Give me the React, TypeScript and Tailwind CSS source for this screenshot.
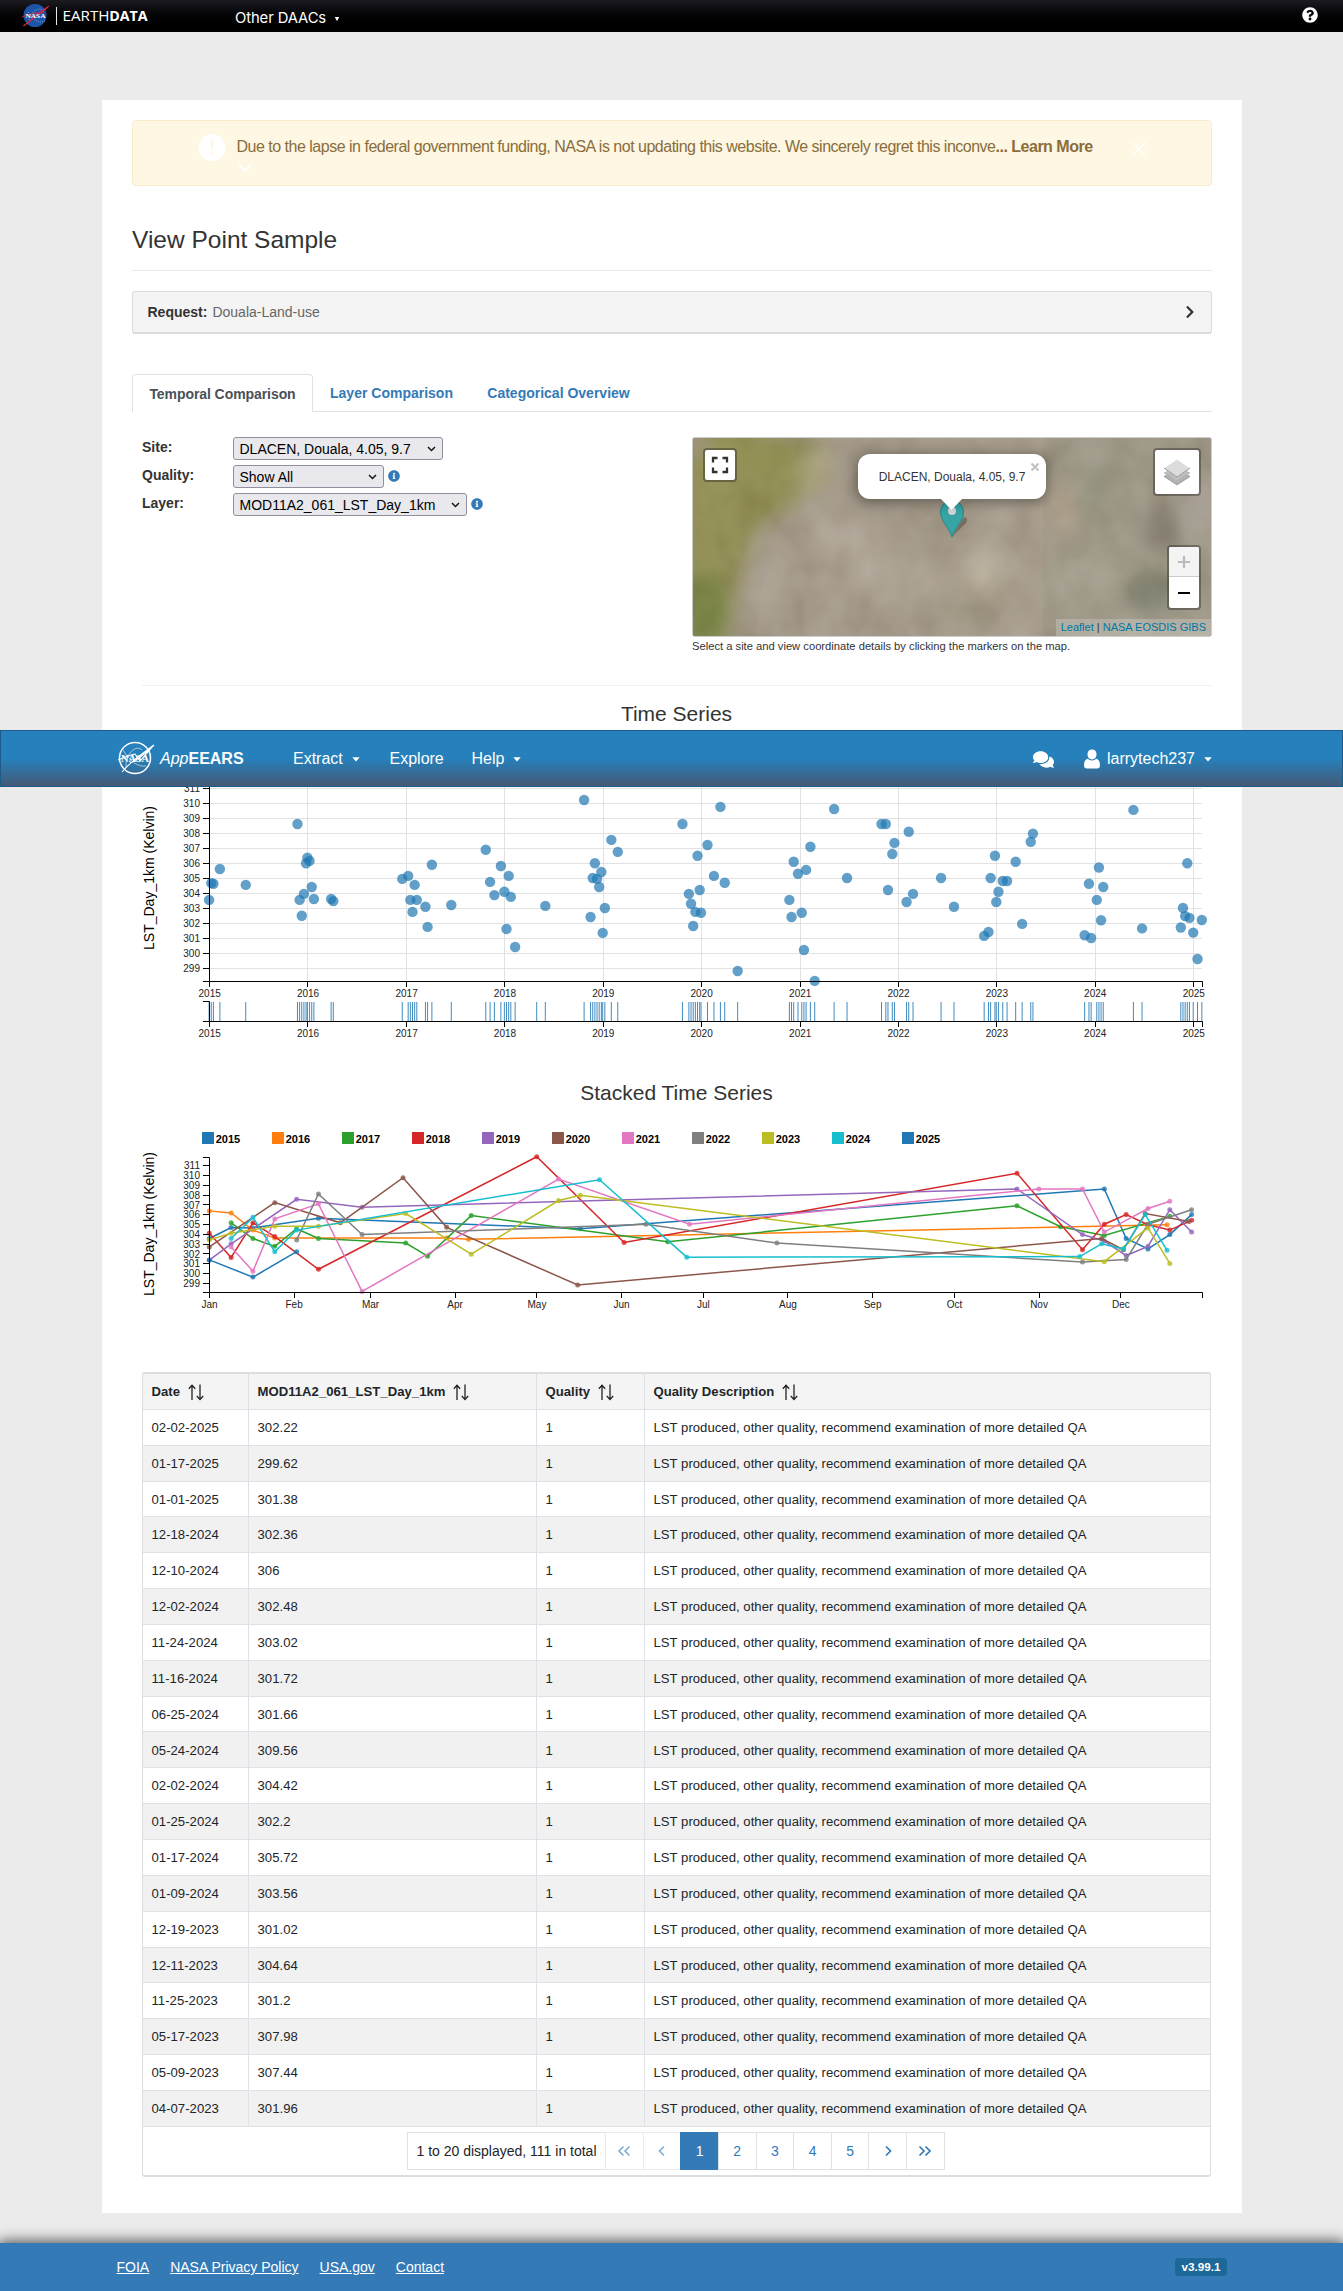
import React from "react";
import { FaInfoCircle, FaQuestionCircle, FaChevronRight, FaComments } from "react-icons/fa";

type Obs = [number, number];

const SERIES: { year: number; color: string; obs: Obs[] }[] = [
  { year: 2015, color: "#1f77b4", obs: [[1, 303.56], [9, 304.68], [17, 304.64], [41, 305.62], [137, 304.56], [329, 308.62], [337, 303.56], [345, 302.5], [353, 303.96], [361, 306]] },
  { year: 2016, color: "#ff7f0e", obs: [[1, 306.38], [9, 306.16], [17, 304.42], [25, 303.62], [89, 303.62], [97, 303.48], [353, 304.96]] },
  { year: 2017, color: "#2ca02c", obs: [[9, 305.16], [17, 303.56], [25, 302.76], [33, 304.56], [41, 303.56], [73, 303.1], [81, 301.76], [97, 305.9], [169, 303.22], [297, 306.9], [313, 304.76], [329, 303.88], [353, 305.82]] },
  { year: 2018, color: "#d62728", obs: [[1, 304.1], [9, 301.62], [17, 305.16], [25, 303.76], [41, 300.42], [121, 311.9], [153, 303.16], [297, 310.22], [321, 302.42], [329, 305.02], [337, 306], [345, 304.96], [353, 304.42], [361, 305.42]] },
  { year: 2019, color: "#9467bd", obs: [[1, 301.36], [9, 303.02], [33, 307.56], [57, 306.76], [297, 308.62], [321, 303.96], [329, 303.3], [337, 301.82], [345, 302.76], [353, 306.5], [361, 304.22]] },
  { year: 2020, color: "#8c564b", obs: [[1, 302.7], [25, 307.22], [49, 305.16], [73, 309.76], [89, 304.7], [137, 298.82], [329, 303.56], [337, 302.42], [345, 306.1], [361, 305.3]] },
  { year: 2021, color: "#e377c2", obs: [[9, 302.7], [17, 300.22], [25, 305.56], [41, 307.1], [57, 298.16], [129, 309.62], [177, 305.02], [305, 308.62], [321, 308.62], [329, 304.22], [345, 306.62], [353, 307.36]] },
  { year: 2022, color: "#7f7f7f", obs: [[33, 303.42], [41, 308.1], [57, 303.96], [161, 305.02], [209, 303.1], [321, 301.16], [337, 301.42], [345, 305.02], [361, 306.5]] },
  { year: 2023, color: "#bcbd22", obs: [[1, 303.42], [9, 304.1], [25, 304.82], [41, 304.82], [73, 306.1], [97, 301.96], [129, 307.44], [137, 307.98], [329, 301.2], [345, 304.64], [353, 301.02]] },
  { year: 2024, color: "#17becf", obs: [[9, 303.56], [17, 305.72], [25, 302.2], [33, 304.42], [145, 309.56], [177, 301.66], [321, 301.72], [329, 303.02], [337, 302.48], [345, 306], [353, 302.36]] },
  { year: 2025, color: "#1f77b4", obs: [[1, 301.38], [17, 299.62], [33, 302.22]] },
];

const YEARS = [2015, 2016, 2017, 2018, 2019, 2020, 2021, 2022, 2023, 2024, 2025];
const KELVINS = [299, 300, 301, 302, 303, 304, 305, 306, 307, 308, 309, 310, 311];
const MONTHS: [string, number][] = [["Jan", 0], ["Feb", 31], ["Mar", 59], ["Apr", 90], ["May", 120], ["Jun", 151], ["Jul", 181], ["Aug", 212], ["Sep", 243], ["Oct", 273], ["Nov", 304], ["Dec", 334]];

const ROWS: [string, string][] = [
  ["02-02-2025", "302.22"], ["01-17-2025", "299.62"], ["01-01-2025", "301.38"], ["12-18-2024", "302.36"],
  ["12-10-2024", "306"], ["12-02-2024", "302.48"], ["11-24-2024", "303.02"], ["11-16-2024", "301.72"],
  ["06-25-2024", "301.66"], ["05-24-2024", "309.56"], ["02-02-2024", "304.42"], ["01-25-2024", "302.2"],
  ["01-17-2024", "305.72"], ["01-09-2024", "303.56"], ["12-19-2023", "301.02"], ["12-11-2023", "304.64"],
  ["11-25-2023", "301.2"], ["05-17-2023", "307.98"], ["05-09-2023", "307.44"], ["04-07-2023", "301.96"],
];

const daysBefore = (year: number) => (year - 2015) * 365 + Math.floor((year - 2013) / 4);
const timeX = (year: number, doy: number) => 107.1 + (daysBefore(year) + doy - 1) * 0.2694;
const timeY = (v: number) => 73.3 + (310 - v) * 15;
const yearX = (year: number, doy: number) => 107.3 + (doy - 1 - (year % 4 === 0 && doy > 60 ? 1 : 0)) * 2.7287;
const stackY = (v: number) => 55.4 + (310 - v) * 9.8;

function EarthdataBar() {
  return (
    <header className="flex h-8 items-start bg-gradient-to-b from-[#1a1a20] to-black text-white">
      <svg className="ml-[21px] mt-[3px]" width="30" height="26" viewBox="0 0 30 26">
        <circle cx="14" cy="12.5" r="11.5" fill="#1d54a7" />
        <path d="M8 17C10 8 19 3 22 8M7 9c5 8 12 12 17 9" fill="none" stroke="#cfdcf3" strokeWidth=".5" strokeDasharray="1 1" />
        <path d="M2 23C9 18 14 12 28 3C20 9 15 14 3 23" fill="#e5243b" stroke="#e5243b" strokeWidth=".8" />
        <path d="M1 14c4-2 9-3 14-4l6 0l7-7" fill="none" stroke="#e5243b" strokeWidth=".9" />
        <text x="4.5" y="15.3" fontSize="7" fontWeight="700" textLength="20" lengthAdjust="spacingAndGlyphs" fill="#fff" className="font-['Liberation_Serif',serif]">NASA</text>
      </svg>
      <div className="ml-[4.5px] mt-[7px] h-[18px] w-px bg-gray-200" />
      <svg className="ml-[4px]" width="90" height="32">
        <text x="1.5" y="21" fontSize="14.6" textLength="47" lengthAdjust="spacingAndGlyphs" fill="#fff" className="font-['Open_Sans',sans-serif]">EARTH</text>
        <text x="48.2" y="21" fontSize="14.6" fontWeight="700" textLength="38.5" lengthAdjust="spacingAndGlyphs" fill="#fff" className="font-['Open_Sans',sans-serif]">DATA</text>
      </svg>
      <div className="ml-[84.5px] mt-[6px] flex items-center font-['Inter',sans-serif] text-[14.8px] leading-6 tracking-[-0.1px]">
        Other DAACs
        <svg className="ml-[8px] mt-[2px]" width="6" height="6"><path d="M.8 1h4.4L3 5.2z" fill="#fff" /></svg>
      </div>
      <FaQuestionCircle className="ml-auto mr-[25px] mt-[7px] h-4 w-4" />
    </header>
  );
}

function Alert() {
  return (
    <div className="flex h-[66px] items-start rounded border border-[#faebcc] bg-[#fdf7e3] text-[#8a6d3b]">
      <svg className="ml-[65px] mt-[13px] shrink-0" width="28" height="28">
        <circle cx="14" cy="13.5" r="13.5" fill="#fff" />
        <path d="M12.6 5h2.8l-.5 11.5h-1.8zM12.6 18.5h2.8v3h-2.8z" fill="#fdf7e3" />
      </svg>
      <div className="ml-[10.5px] mt-[14px] w-[869px] shrink-0">
        <p className="whitespace-nowrap text-base leading-6 tracking-[-0.497px]">
          Due to the lapse in federal government funding, NASA is not updating this website. We sincerely regret this inconve<b>... Learn More</b>
        </p>
        <svg className="mt-[2px]" width="20" height="14"><path d="M2 3l6 7l6-7" fill="none" stroke="#fff" strokeWidth="2" /></svg>
      </div>
      <svg className="ml-[24px] mt-[19px] shrink-0" width="18" height="18"><path d="M2 2l14 14M16 2L2 16" stroke="#fff" strokeWidth="1.3" /></svg>
    </div>
  );
}

function SelectBox({ label, width }: { label: string; width: string }) {
  return (
    <div className={"flex h-[23px] items-center justify-between rounded-[3px] border border-[#8f8f9d] bg-[#e9e9ed] pl-[5.5px] pr-[6px] text-sm text-black " + width}>
      <span className="whitespace-nowrap">{label}</span>
      <svg width="9" height="8"><path d="M1 2l3.5 3.6L8 2" fill="none" stroke="#111" strokeWidth="1.4" /></svg>
    </div>
  );
}

function Field({ name, value, width, info }: { name: string; value: string; width: string; info?: boolean }) {
  return (
    <div className="flex h-7 items-start">
      <span className="w-[91px] text-sm font-bold leading-[21px]">{name}</span>
      <SelectBox label={value} width={width} />
      {info && <FaInfoCircle className="ml-1 mt-[5px] h-3 w-3 text-[#337ab7]" />}
    </div>
  );
}

const CONTROL = "absolute rounded border-2 border-black/30 bg-white bg-clip-padding flex items-center justify-center";

function SiteMap() {
  return (
    <div className="relative h-[199.5px] w-[520px] overflow-hidden rounded-[3px] border border-[#ccc] bg-[#a1978a] text-[#333]">
      <svg className="absolute inset-0" width="518" height="198" viewBox="0 0 518 198">
        <defs>
          <filter id="soft" x="-30%" y="-30%" width="160%" height="160%"><feGaussianBlur stdDeviation="10" /></filter>
          <filter id="grain" x="0" y="0" width="100%" height="100%">
            <feTurbulence type="fractalNoise" baseFrequency="0.022 0.018" numOctaves="3" seed="8" />
            <feColorMatrix values="0.7 0.7 0 0 -0.16  0.7 0.7 0 0 -0.2  0.7 0.7 0 0 -0.27  0 0 0 0 0.5" />
          </filter>
        </defs>
        <rect width="518" height="198" fill="#9f9484" />
        <g filter="url(#soft)">
          <path d="M-20 -20h50l60 20l40 0l-20 60l-45 30l-20 50l-10 70h-60z" fill="#85843f" />
          <ellipse cx="70" cy="20" rx="28" ry="25" fill="#7d7b35" />
          <ellipse cx="12" cy="175" rx="24" ry="40" fill="#66732b" />
          <ellipse cx="2" cy="4" rx="12" ry="12" fill="#9c8f7c" />
          <ellipse cx="122" cy="30" rx="14" ry="22" fill="#a29d6d" />
          <ellipse cx="150" cy="120" rx="45" ry="40" fill="#a89d8e" />
          <ellipse cx="185" cy="45" rx="35" ry="30" fill="#938878" />
          <ellipse cx="290" cy="145" rx="20" ry="28" fill="#b5aa96" />
          <ellipse cx="265" cy="175" rx="35" ry="18" fill="#938a76" />
          <ellipse cx="370" cy="70" rx="14" ry="30" fill="#b59c84" />
          <ellipse cx="470" cy="90" rx="18" ry="22" fill="#71655a" />
          <ellipse cx="505" cy="70" rx="14" ry="22" fill="#a79a92" />
          <ellipse cx="460" cy="155" rx="26" ry="20" fill="#70715e" />
          <ellipse cx="400" cy="50" rx="25" ry="30" fill="#918a77" />
        </g>
        <rect x="350" width="168" height="198" fill="#7f8878" opacity=".22" />
        <rect width="518" height="198" filter="url(#grain)" opacity=".4" />
      </svg>
      <svg className="absolute left-[240px] top-[59px]" width="44" height="44">
        <path d="M19 40L33 26q3-5-2-6z" fill="#000" opacity=".25" />
        <path d="M19 40C16.500 31 7.500 24 7.500 15A11.500 12 0 0 1 30.500 15C30.500 24 21.500 31 19 40z" fill="#37a5a5" stroke="#22888a" />
        <circle cx="19" cy="14" r="4" fill="#d5d5d5" />
      </svg>
      <div className="absolute left-[165px] top-[16px] flex h-[45px] w-[188px] items-center justify-center rounded-xl bg-white text-xs shadow-[0_3px_14px_rgba(0,0,0,0.4)]">
        <span className="whitespace-nowrap">DLACEN, Douala, 4.05, 9.7</span>
        <svg className="absolute right-[6px] top-[8px]" width="10" height="10"><path d="M1.500 1.500l7 7M8.500 1.500l-7 7" stroke="#c3c3c3" strokeWidth="2.2" /></svg>
        <svg className="absolute left-[83px] top-[45px]" width="22" height="12"><path d="M0 0h21L10.500 11z" fill="#fff" /></svg>
      </div>
      <div className={CONTROL + " left-[10px] top-[10px] h-[34px] w-[34px]"}>
        <svg width="18" height="18"><path d="M2 6.500V2h4.500M11.500 2H16v4.500M16 11.500V16h-4.500M6.500 16H2v-4.500" fill="none" stroke="#333" strokeWidth="2.300" /></svg>
      </div>
      <div className={CONTROL + " right-[10px] top-[10px] h-[48px] w-[48px]"}>
        <svg width="28" height="28" viewBox="0 0 28 28">
          <path d="M1 18.500L14 9.500l13 9L14 27z" fill="#b0b0b0" stroke="#999" strokeWidth=".8" />
          <path d="M1 14.500L14 5.500l13 9L14 23z" fill="#bdbdbd" stroke="#fff" strokeWidth="1" />
          <path d="M1 14.500L14 23l13-8.500" fill="none" stroke="#999" strokeWidth=".9" />
          <path d="M1 10L14 1l13 9L14 19z" fill="#dcdcdc" stroke="#fff" strokeWidth="1" />
          <path d="M1 10L14 19l13-9" fill="none" stroke="#888" strokeWidth=".9" />
        </svg>
      </div>
      <div className={CONTROL + " right-[10px] top-[107px] h-[65px] w-[34px] flex-col overflow-hidden"}>
        <div className="flex h-[30px] w-full items-center justify-center border-b border-[#ccc] bg-[#f4f4f4]">
          <svg width="14" height="14"><path d="M7 1v12M1 7h12" stroke="#bbb" strokeWidth="2.200" /></svg>
        </div>
        <div className="flex flex-1 items-center justify-center">
          <svg width="14" height="14"><path d="M1 7h12" stroke="#000" strokeWidth="2.200" /></svg>
        </div>
      </div>
      <div className="absolute bottom-0 right-0 whitespace-nowrap bg-white/20 px-[5px] text-[11px] leading-[17px] text-[#0078a8]">
        Leaflet <span className="text-[#333]">|</span> NASA EOSDIS GIBS
      </div>
    </div>
  );
}

function TimeSeriesChart() {
  const all = SERIES.flatMap((s) => s.obs.map(([d, v]) => ({ x: timeX(s.year, d), y: timeY(v) })));
  return (
    <svg className="block font-['Liberation_Sans',sans-serif]" width="1140" height="330" viewBox="0 0 1140 330">
      <g stroke="#ddd" strokeOpacity=".85">
        {KELVINS.map((k) => <line key={k} x1="107" x2="1100" y1={Math.round(timeY(k)) + 0.5} y2={Math.round(timeY(k)) + 0.5} />)}
        {YEARS.slice(1).map((y) => <line key={y} x1={Math.round(timeX(y, 1)) + 0.5} x2={Math.round(timeX(y, 1)) + 0.5} y1="40" y2="251" />)}
      </g>
      {all.map((p, i) => <circle key={i} cx={p.x} cy={p.y} r="5.200" fill="#1f77b4" fillOpacity=".7" />)}
      {all.map((p, i) => <line key={i} x1={p.x} x2={p.x} y1="272" y2="291" stroke="#1f77b4" strokeOpacity=".85" />)}
      <path d="M107.500 40V251.500M101 251.500H1100.500V257M101 271.500H107.500V291.500M101 291.500H1100.500V297" fill="none" stroke="#000" />
      <g fill="#222" fontSize="10">
        {KELVINS.map((k) => (
          <g key={k}>
            <path d={`M101 ${Math.round(timeY(k)) + 0.5}h6`} stroke="#000" />
            <text x="98" y={timeY(k) + 3.6} textAnchor="end">{k}</text>
          </g>
        ))}
        {YEARS.map((y) => (
          <g key={y} textAnchor="middle">
            <path d={`M${Math.round(timeX(y, 1)) + 0.5} 251v6m0 34v6`} stroke="#000" />
            <text x={timeX(y, 1) + 0.6} y="267">{y}</text>
            <text x={timeX(y, 1) + 0.6} y="307">{y}</text>
          </g>
        ))}
      </g>
      <text transform="translate(52 148) rotate(-90)" textAnchor="middle" fontSize="14" fill="#000">LST_Day_1km (Kelvin)</text>
    </svg>
  );
}

function StackedChart() {
  return (
    <svg className="block font-['Liberation_Sans',sans-serif]" width="1140" height="200" viewBox="0 0 1140 200">
      <g transform="translate(0 -10)">
        {SERIES.map((s, i) => (
          <g key={s.year}>
            <rect x={100 + i * 70} y="22" width="12" height="12" fill={s.color} />
            <text x={113.7 + i * 70} y="33" fontSize="11" fontWeight="700" fill="#000">{s.year}</text>
          </g>
        ))}
        {SERIES.map((s) => (
          <g key={s.year}>
            <polyline fill="none" stroke={s.color} strokeWidth="1.500" points={s.obs.map(([d, v]) => `${yearX(s.year, d)},${stackY(v) + 10}`).join(" ")} />
            {s.obs.map(([d, v]) => <circle key={d} cx={yearX(s.year, d)} cy={stackY(v) + 10} r="2.500" fill={s.color} fillOpacity=".8" />)}
          </g>
        ))}
        <path d="M101 47.500H107.500V182.500M101 182.500H1100.500V188" fill="none" stroke="#000" />
        <g fill="#222" fontSize="10">
          {KELVINS.map((k) => (
            <g key={k}>
              <path d={`M101 ${Math.round(stackY(k) + 9.6) + 0.5}h6`} stroke="#000" />
              <text x="98" y={stackY(k) + 13.8} textAnchor="end">{k}</text>
            </g>
          ))}
          {MONTHS.map(([m, d]) => (
            <g key={m} textAnchor="middle">
              <path d={`M${Math.round(107 + d * 2.7287) + 0.5} 182v6`} stroke="#000" />
              <text x={107.5 + d * 2.7287} y="198">{m}</text>
            </g>
          ))}
        </g>
        <text transform="translate(52 114) rotate(-90)" textAnchor="middle" fontSize="14" fill="#000">LST_Day_1km (Kelvin)</text>
      </g>
    </svg>
  );
}

function SortHeader({ children }: { children: string }) {
  return (
    <div className="flex items-center gap-[8px] border-r border-[#dee2e6] pl-[8.500px] last:border-r-0">
      <span>{children}</span>
      <svg className="mt-[3px]" width="16" height="17">
        <path d="M4 16V1.500M.8 4.800L4 1.200l3.200 3.600M12 .5V15M8.800 12L12 15.600l3.200-3.600" fill="none" stroke="#222" strokeWidth="1.300" />
      </svg>
    </div>
  );
}

const GRID = "grid grid-cols-[106px_288px_108px_1fr] border-b border-[#dee2e6]";

function ResultsTable() {
  const cell = "flex items-center border-r border-[#dee2e6] pl-[8.500px] pt-px last:border-r-0";
  return (
    <div className="ml-[40px] mr-[31px] mt-[52px] h-[805px] overflow-hidden rounded-[3px] border border-b-2 border-t-2 border-[#dcdee0] text-[13.125px] tracking-[0.030px] text-[#212529]">
      <div className={GRID + " h-[35.850px] bg-[#f4f4f4] font-bold"}>
        <SortHeader>Date</SortHeader>
        <SortHeader>MOD11A2_061_LST_Day_1km</SortHeader>
        <SortHeader>Quality</SortHeader>
        <SortHeader>Quality Description</SortHeader>
      </div>
      {ROWS.map(([date, value]) => (
        <div key={date} className={GRID + " h-[35.850px] odd:bg-[#f1f1f1]"}>
          <div className={cell}>{date}</div>
          <div className={cell}>{value}</div>
          <div className={cell}>1</div>
          <div className={cell}>LST produced, other quality, recommend examination of more detailed QA</div>
        </div>
      ))}
      <Pagination />
    </div>
  );
}

function Chevrons({ d }: { d: string }) {
  return <svg width="14" height="12"><path d={d} fill="none" stroke="currentColor" strokeWidth="1.700" /></svg>;
}

function Pagination() {
  const box = "-ml-px flex w-[38.650px] items-center justify-center border";
  const live = " border-[#dee2e6] text-[#337ab7]";
  const off = " border-[#e9ecef] text-[#85afd4]";
  return (
    <div className="ml-[264px] mt-[5.500px] flex h-[38px] text-sm tracking-normal">
      <div className="flex w-[199px] items-center justify-center whitespace-nowrap border border-[#dee2e6] text-[#212529]">1 to 20 displayed, 111 in total</div>
      <div className={box + off}><Chevrons d="M6.500 1.500L2 6l4.500 4.500M12.500 1.500L8 6l4.500 4.500" /></div>
      <div className={box + off}><Chevrons d="M9 1.500L4.500 6L9 10.500" /></div>
      <div className={box + " border-[#337ab7] bg-[#337ab7] text-white"}>1</div>
      {["2", "3", "4", "5"].map((n) => <div key={n} className={box + live}>{n}</div>)}
      <div className={box + live}><Chevrons d="M5 1.500L9.500 6L5 10.500" /></div>
      <div className={box + live}><Chevrons d="M1.500 1.500L6 6l-4.500 4.500M7.500 1.500L12 6l-4.500 4.500" /></div>
    </div>
  );
}

function Caret() {
  return <svg width="8" height="5"><path d="M.3.3h7.400L4 4.500z" fill="#fff" /></svg>;
}

function NavBar() {
  return (
    <nav className="absolute left-0 top-[730px] z-10 flex h-[57px] w-full items-center border border-[#1d5c8a] bg-[linear-gradient(to_bottom,#2680bb_0%,#2680bb_50%,#445a76_100%)] text-base text-white">
      <svg className="ml-[116px] -mt-px" width="38" height="34" viewBox="0 0 38 34">
        <circle cx="18" cy="17" r="15.500" fill="none" stroke="#fff" strokeWidth="1.500" />
        <path d="M9 26C8 12 20 3 25 9M6 9c8 13 16 17 23 16" fill="none" stroke="#fff" strokeOpacity=".7" strokeWidth=".8" />
        <path d="M5 31C13 21 22 15 37 4C27 14 20 19 13 22M1 19c6-2 11-5 17-6l5 7L37 4" fill="none" stroke="#fff" strokeWidth="1.100" />
        <text x="4" y="21" fontSize="10" fontWeight="700" fill="#fff" textLength="28" lengthAdjust="spacingAndGlyphs" className="font-['Liberation_Serif',serif]">NASA</text>
      </svg>
      <span className="ml-[5px] w-[133px] pt-px"><i>App</i><b>EEARS</b></span>
      <span className="flex w-[96.500px] items-center gap-[9px] pt-px">Extract <Caret /></span>
      <span className="w-[82px] pt-px">Explore</span>
      <span className="flex items-center gap-[9px] pt-px">Help <Caret /></span>
      <FaComments className="ml-auto mr-[30px] mt-px h-[21px] w-[21px]" />
      <svg width="16" height="20" viewBox="0 0 16 20"><path d="M8 .5C10.800.5 12.500 2.500 12.500 5.300S10.800 10.500 8 10.500S3.500 8.100 3.500 5.300S5.200.5 8 .5zM4 9.800C5.500 12 10.500 12 12 9.800c3 .4 4 3.400 4 6.800c0 1.900-1.200 2.900-2.900 2.900H2.900C1.200 19.500 0 18.500 0 16.600C0 13.200 1 10.200 4 9.800z" fill="#fff" /></svg>
      <span className="ml-[7px] mr-[9px] pt-px">larrytech237</span>
      <span className="mr-[130px] flex pt-px"><Caret /></span>
    </nav>
  );
}

export default function App() {
  return (
    <div className="relative h-[2291px] w-[1343px] overflow-hidden bg-[#ebebeb] font-['Liberation_Sans',Arial,sans-serif] text-[#333]">
      <EarthdataBar />
      <main className="ml-[102px] mt-[68px] h-[2113px] w-[1140px] bg-white pt-[20px]">
        <div className="mx-[30px]">
          <Alert />
          <h1 className="mt-[34px] border-b border-[#eaeaea] pb-[10px] text-[24.500px] leading-10">View Point Sample</h1>
          <div className="mt-[20px] flex h-[43px] items-center rounded-[3px] border border-b-2 border-[#d9dbdc] bg-[#f4f4f4] pl-[14.500px] pr-[16px] text-sm">
            <b className="mr-[5px]">Request:</b>
            <span className="text-[#666]">Douala-Land-use</span>
            <FaChevronRight className="ml-auto h-[14px] w-[10px]" />
          </div>
          <div className="mt-[40px] flex h-[38px] border-b border-[#dee2e6] text-sm font-bold text-[#337ab7]">
            <div className="-mb-px flex w-[181px] items-center justify-center rounded-t border border-b-0 border-[#dee2e6] bg-white tracking-[-0.070px] text-[#495057]">Temporal Comparison</div>
            <div className="flex w-[157px] items-center justify-center">Layer Comparison</div>
            <div className="flex w-[177px] items-center justify-center">Categorical Overview</div>
          </div>
          <div className="ml-[10px] mt-[25px] flex h-[249px] justify-between border-b border-[#f0f0f0]">
            <div>
              <Field name="Site:" value="DLACEN, Douala, 4.05, 9.7" width="w-[210px]" />
              <Field name="Quality:" value="Show All" width="w-[151px]" info />
              <Field name="Layer:" value="MOD11A2_061_LST_Day_1km" width="w-[234px]" info />
            </div>
            <div>
              <SiteMap />
              <p className="text-[11.200px] leading-[18px]">Select a site and view coordinate details by clicking the markers on the map.</p>
            </div>
          </div>
        </div>
        <h2 className="h-[44px] pl-[9px] pt-[12px] text-center text-[21px] leading-[32px]">Time Series</h2>
        <TimeSeriesChart />
        <h2 className="h-[60px] pl-[9px] pt-[17px] text-center text-[21px] leading-[32px]">Stacked Time Series</h2>
        <StackedChart />
        <ResultsTable />
      </main>
      <footer className="mt-[30px] flex h-[48px] items-center bg-[#337ab7] pl-[116.500px] pr-[116px] text-sm text-white shadow-[0_0_13px_2px_rgba(0,0,0,0.65)]">
        <div className="flex gap-[21px] underline">
          <span>FOIA</span>
          <span>NASA Privacy Policy</span>
          <span>USA.gov</span>
          <span>Contact</span>
        </div>
        <span className="ml-auto flex h-[18px] w-[52px] items-center justify-center rounded bg-[#1b6899] text-[11.700px] font-bold">v3.99.1</span>
      </footer>
      <NavBar />
    </div>
  );
}
